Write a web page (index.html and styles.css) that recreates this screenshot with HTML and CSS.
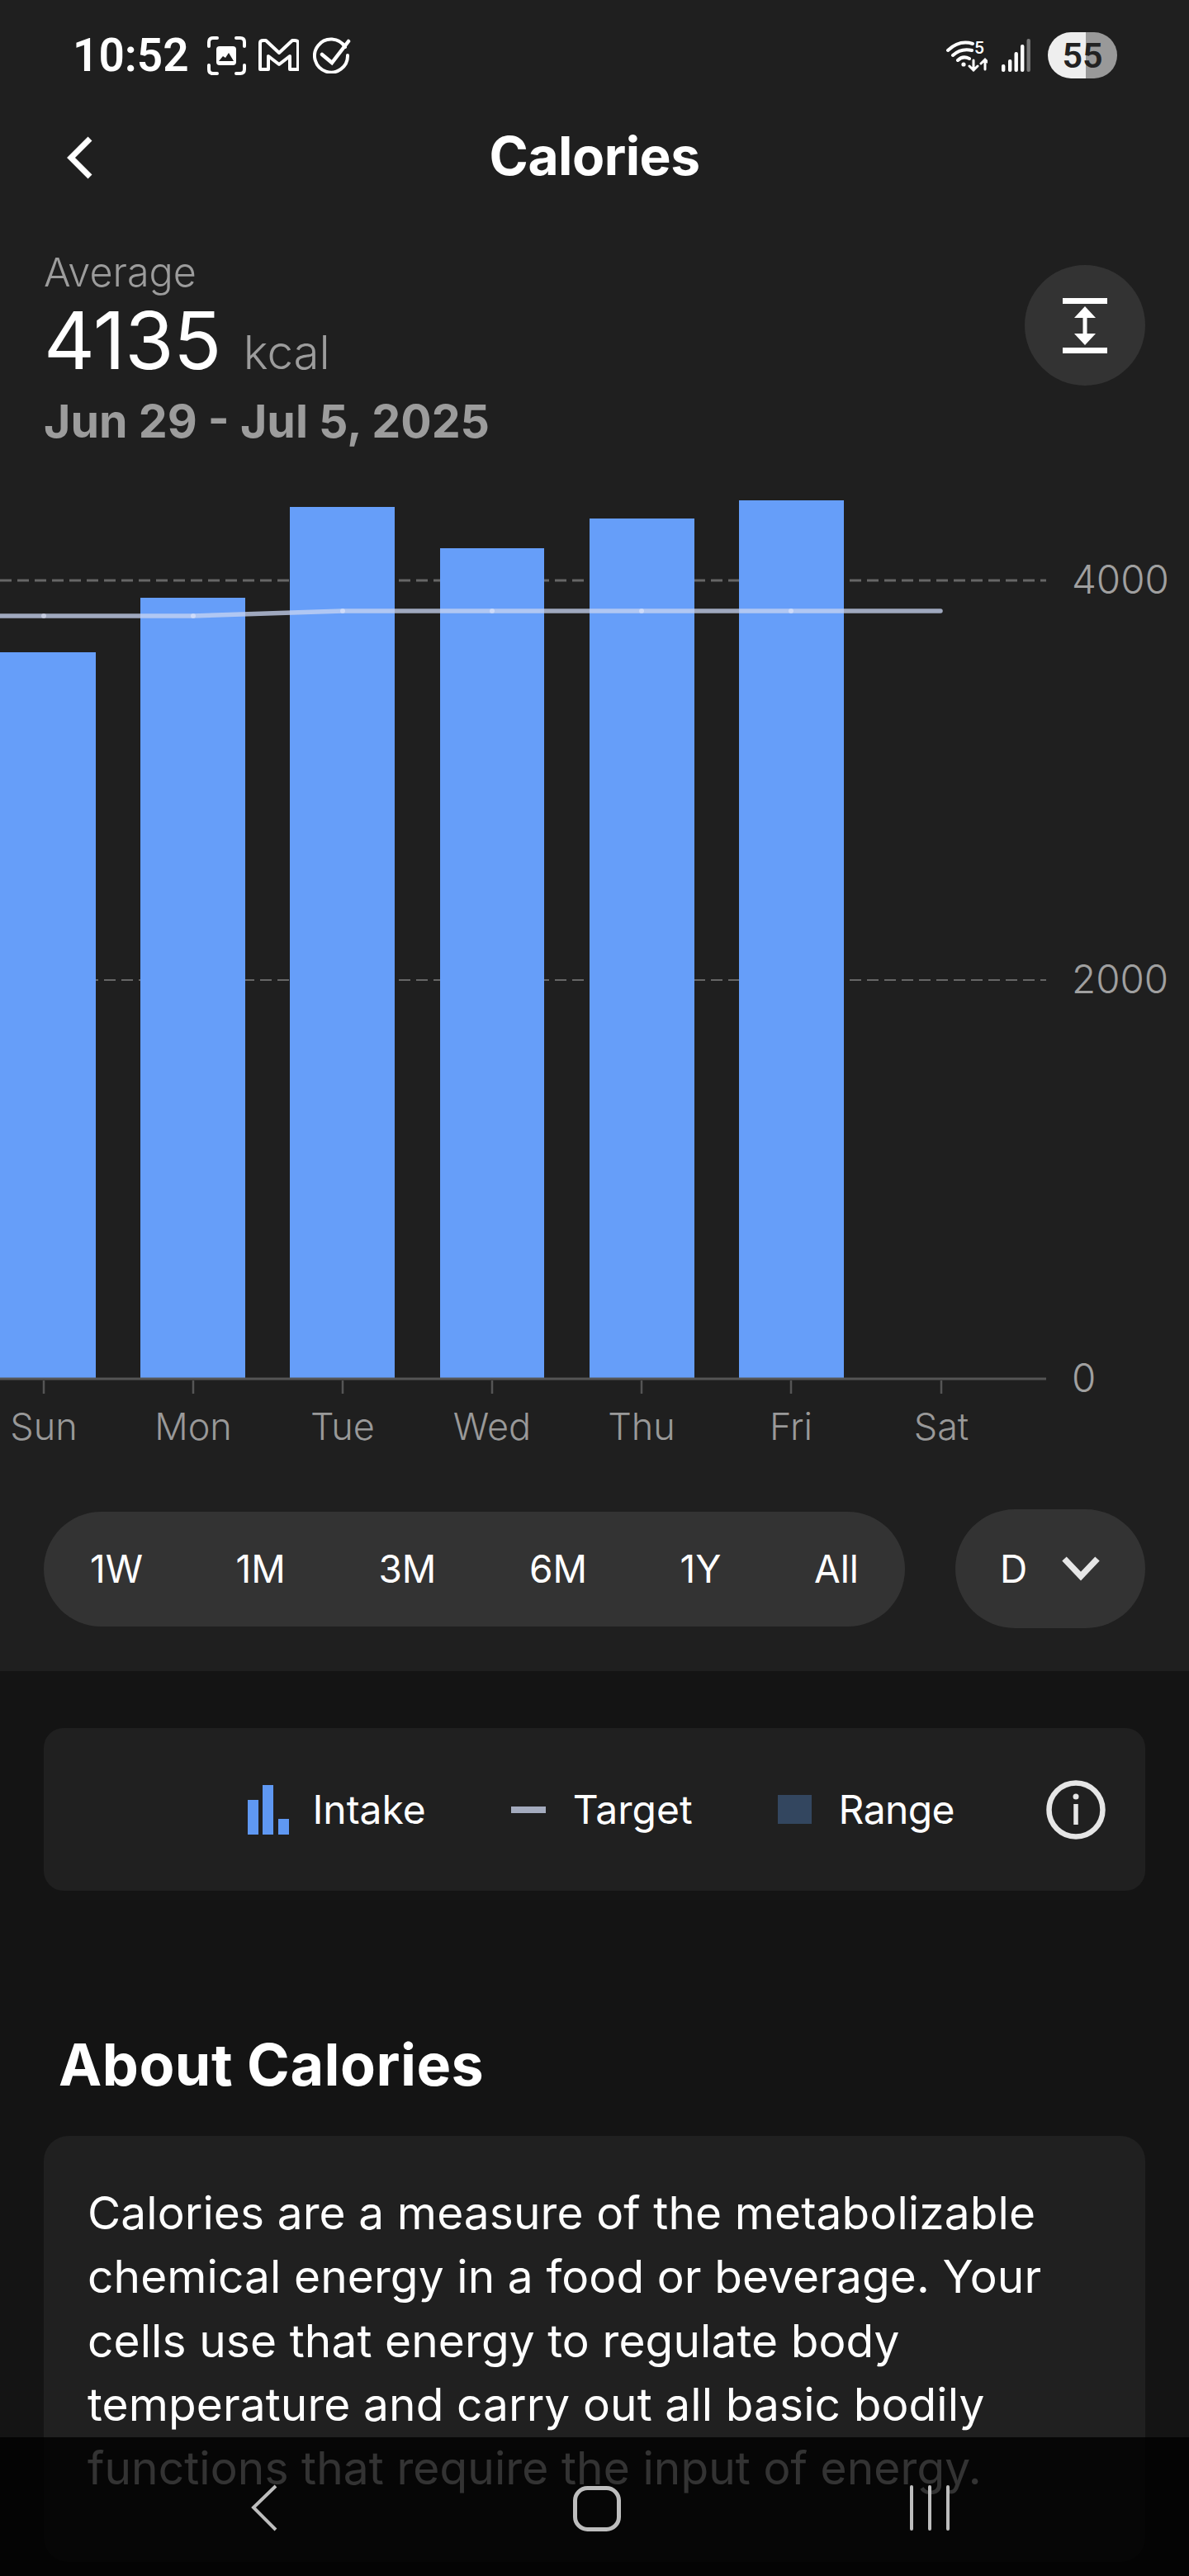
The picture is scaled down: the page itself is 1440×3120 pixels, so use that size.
FILE: index.html
```html
<!DOCTYPE html>
<html lang="en">
<head>
<meta charset="utf-8">
<title>Calories</title>
<link rel="stylesheet" href="styles.css">
</head>
<body>
<div class="screen">
  <section class="top">
    <div class="status">
      <div class="status-left">
        <span class="time">10:52</span>
        <svg class="ic-shot" width="47" height="47" viewBox="249 44 47 47" fill="none" stroke="#fff" stroke-width="4" stroke-linecap="round">
          <path d="M251 56v-5q0-5 5-5h5M284 46h5q5 0 5 5v5M294 79v5q0 5-5 5h-5M261 89h-5q-5 0-5-5v-5"/>
          <rect x="260" y="56" width="24" height="23" rx="4" fill="#fff" stroke="none"/>
          <path d="M263 74l5-6 3 2 4-6 6 10z" fill="#1f1f1f" stroke="none"/>
        </svg>
        <svg class="ic-mail" width="49" height="40" viewBox="311 46 49 40" fill="none" stroke="#fff" stroke-width="4" stroke-linejoin="round">
          <path d="M313 83V51q0-3 4-3h3l16 15 16-15h3q4 0 4 3v32h-10V67l-13 10-13-10v16z"/>
        </svg>
        <svg class="ic-check" width="46" height="44" viewBox="377 46 46 44" fill="none" stroke="#fff" stroke-linecap="round">
          <path d="M416 58a20 20 0 1 0 3 10" stroke-width="4"/>
          <path d="M388 67l12 10 20-26" stroke-width="4.5"/>
        </svg>
      </div>
      <div class="status-right">
        <svg class="ic-wifi" width="50" height="40" viewBox="1146 48 50 40" fill="none" stroke="#fff" stroke-linecap="round">
          <path d="M1148 62q14-13 30-8M1154 68q10-9 23-6M1160 74q6-6 14-2" stroke-width="4"/>
          <circle cx="1167" cy="79" r="2.6" fill="#fff" stroke="none"/>
          <text class="wifi-num" x="1180" y="66">5</text>
          <path d="M1179 74v12M1174 81l5 5 5-5M1193 85V73M1188 78l5-5 5 5" stroke-width="3"/>
        </svg>
        <svg class="ic-signal" width="35" height="40" viewBox="1213 47 35 40">
          <rect class="sig" x="1213" y="78" width="4.4" height="9" rx="2"/>
          <rect class="sig" x="1221" y="72" width="4.4" height="15" rx="2"/>
          <rect class="sig" x="1228.5" y="63" width="4.4" height="24" rx="2"/>
          <rect class="sig" x="1236" y="54" width="4.4" height="33" rx="2"/>
          <rect class="sig-off" x="1243.5" y="47" width="4.4" height="40" rx="2"/>
        </svg>
        <div class="battery">55</div>
      </div>
    </div>

    <header class="appbar">
      <svg class="back" width="40" height="56" viewBox="76 162 40 56" fill="none" stroke="#fff" stroke-width="7">
        <path d="M109 168L86 191l23 23" stroke-linejoin="miter"/>
      </svg>
      <h1 class="title">Calories</h1>
    </header>

    <div class="summary">
      <div class="summary-text">
        <div class="avg-label">Average</div>
        <div class="avg-value"><span class="avg-num">4135</span><span class="avg-unit">kcal</span></div>
        <div class="avg-date">Jun 29 - Jul 5, 2025</div>
      </div>
      <button class="round-btn" aria-label="Fit range">
        <svg width="54" height="67" viewBox="1287 361 54 67" fill="#fff">
          <rect x="1287" y="361" width="54" height="7"/>
          <rect x="1287" y="421" width="54" height="7"/>
          <path d="M1314 371l13 14h-10.500v19H1327l-13 14-13-14h10.500v-19H1301z"/>
        </svg>
      </button>
    </div>

    <svg class="chart" width="1440" height="1240" viewBox="0 560 1440 1240">
      <line class="grid" x1="0" y1="703" x2="1267" y2="703"/>
      <line class="grid grid-thin" x1="0" y1="1187" x2="1267" y2="1187"/>
      <rect class="bar" x="-11" y="790" width="127" height="880"/>
      <rect class="bar" x="170" y="724" width="127" height="946"/>
      <rect class="bar" x="351" y="614" width="127" height="1056"/>
      <rect class="bar" x="533" y="664" width="126" height="1006"/>
      <rect class="bar" x="714" y="628" width="127" height="1042"/>
      <rect class="bar" x="895" y="606" width="127" height="1064"/>
      <line class="axis" x1="0" y1="1670" x2="1267" y2="1670"/>
      <path class="ticks" d="M53 1672v16M234 1672v16M415 1672v16M596 1672v16M777 1672v16M958 1672v16M1140 1672v16"/>
      <path class="target" d="M0 746H234L415 740H1139"/>
      <g class="target-dots">
        <circle cx="53" cy="746" r="3"/><circle cx="234" cy="746" r="3"/><circle cx="415" cy="740" r="3"/>
        <circle cx="596" cy="740" r="3"/><circle cx="777" cy="740" r="3"/><circle cx="958" cy="740" r="3"/>
      </g>
      <text class="y-label" x="1298" y="719">4000</text>
      <text class="y-label" x="1298" y="1203">2000</text>
      <text class="y-label" x="1298" y="1686">0</text>
      <text class="x-label" x="53" y="1744">Sun</text>
      <text class="x-label" x="234" y="1744">Mon</text>
      <text class="x-label" x="415" y="1744">Tue</text>
      <text class="x-label" x="596" y="1744">Wed</text>
      <text class="x-label" x="777" y="1744">Thu</text>
      <text class="x-label" x="958" y="1744">Fri</text>
      <text class="x-label" x="1140" y="1744">Sat</text>
    </svg>

    <div class="controls">
      <div class="ranges">
        <span>1W</span><span>1M</span><span>3M</span><span>6M</span><span>1Y</span><span>All</span>
      </div>
      <div class="period">
        <span>D</span>
        <svg width="46" height="30" viewBox="0 0 46 30" fill="none" stroke="#e6e6e6" stroke-width="7.500"><path d="M3 3l20 21L43 3"/></svg>
      </div>
    </div>
  </section>

  <section class="lower">
    <div class="legend">
      <div class="legend-item gap-intake">
        <svg width="50" height="60" viewBox="301 2165 50 60" fill="#5f98f2">
          <rect x="301" y="2183" width="13" height="42"/>
          <rect x="319" y="2165" width="13" height="60"/>
          <rect x="338" y="2206" width="13" height="19"/>
        </svg>
        <span>Intake</span>
      </div>
      <div class="legend-item">
        <span class="swatch-line"></span>
        <span>Target</span>
      </div>
      <div class="legend-item">
        <span class="swatch-range"></span>
        <span class="tight">Range</span>
      </div>
      <svg class="info" width="72" height="72" viewBox="0 0 72 72" fill="none" stroke="#e6e6e6">
        <circle cx="36" cy="36" r="32.500" stroke-width="6.500"/>
        <path d="M36 29v25" stroke-width="5.500"/>
        <circle cx="36" cy="20" r="3.500" fill="#e6e6e6" stroke="none"/>
      </svg>
    </div>

    <h2 class="about-title">About Calories</h2>
    <div class="about-card">
      <p>Calories are a measure of the metabolizable chemical energy in a food or beverage. Your cells use that energy to regulate body temperature and carry out all basic bodily functions that require the input of energy.</p>
    </div>
  </section>

  <nav class="navbar">
    <svg class="nav-icons" width="1440" height="168" viewBox="0 2952 1440 168" fill="none" stroke="#bdbdbd">
      <path d="M334 3011l-27 26 27 27" stroke-width="4"/>
      <rect x="696.500" y="3013.500" width="53" height="50" rx="15" stroke-width="5"/>
      <path d="M1104 3012v51M1126 3012v51M1148 3012v51" stroke-width="4" stroke-linecap="round"/>
    </svg>
  </nav>
</div>
</body>
</html>
```

FILE: styles.css
```css
* { box-sizing: border-box; }

html, body {
  margin: 0;
  padding: 0;
  background: #141414;
}

body {
  font-family: "Inter", "Liberation Sans", sans-serif;
  color: #fff;
}

.screen {
  position: relative;
  width: 1440px;
  height: 3120px;
  overflow: hidden;
  background: #141414;
}

.top {
  height: 2024px;
  background: #1f1f1f;
}

/* status bar */
.status {
  height: 134px;
  padding: 0 87px 0 88px;
  display: flex;
  align-items: center;
  justify-content: space-between;
}

.status-left,
.status-right {
  display: flex;
  align-items: center;
}

.time {
  font-family: "Roboto", sans-serif;
  font-weight: 600;
  font-size: 55px;
  line-height: 60px;
  margin-right: 22px;
}

.ic-shot { margin-right: 15px; }
.ic-mail { margin-right: 17px; }

.status-right svg { display: block; }
.ic-wifi { margin-right: 17px; }
.ic-signal { margin-right: 21px; }

.wifi-num {
  font-family: "Roboto", sans-serif;
  font-size: 21px;
  font-weight: 500;
  fill: #fff;
  stroke: none;
}

.sig { fill: #fff; }
.sig-off { fill: #777; }

.battery {
  width: 84px;
  height: 56px;
  border-radius: 28px;
  background: linear-gradient(90deg, #eeeeee 0 46px, #999999 46px 100%);
  color: #222;
  font-family: "Roboto", sans-serif;
  font-weight: 600;
  font-size: 43px;
  line-height: 56px;
  text-align: center;
}

/* app bar */
.appbar {
  position: relative;
  height: 110px;
  display: flex;
  align-items: center;
  justify-content: center;
}

.back {
  position: absolute;
  left: 76px;
  top: 28px;
}

.title {
  margin: 0;
  font-size: 64px;
  line-height: 72px;
  font-weight: 700;
  letter-spacing: -0.5px;
}

/* summary */
.summary {
  height: 316px;
  padding: 58px 53px 0 53px;
  display: flex;
  justify-content: space-between;
  align-items: flex-start;
}

.avg-label {
  font-size: 48.500px;
  line-height: 56px;
  font-weight: 350;
  color: #9c9c9c;
}

.avg-value {
  display: flex;
  align-items: baseline;
  height: 96px;
  margin-top: 6px;
}

.avg-num {
  font-size: 96px;
  line-height: 96px;
  font-weight: 400;
  letter-spacing: -0.5px;
}

.avg-unit {
  margin-left: 27px;
  font-size: 56.500px;
  font-weight: 350;
  color: #9c9c9c;
}

.avg-date {
  margin-top: 20px;
  font-size: 55.500px;
  line-height: 60px;
  font-weight: 700;
  color: #9c9c9c;
}

.round-btn {
  width: 146px;
  height: 146px;
  margin-top: 19px;
  border: 0;
  padding: 0;
  border-radius: 50%;
  background: #333333;
  display: flex;
  align-items: center;
  justify-content: center;
}

/* chart */
.chart { display: block; }

.bar { fill: #669ef9; }

.grid {
  stroke: #666666;
  stroke-width: 3;
  stroke-dasharray: 14 7;
}

.grid-thin { stroke-width: 2; }

.axis {
  stroke: #555555;
  stroke-width: 3;
}

.ticks {
  stroke: #555555;
  stroke-width: 2.500;
  fill: none;
}

.target {
  fill: none;
  stroke: rgba(200, 212, 240, 0.76);
  stroke-width: 5.500;
  stroke-linecap: round;
}

.target-dots circle { fill: rgba(235, 240, 255, 0.5); }

.y-label {
  font-size: 47.500px;
  font-weight: 350;
  fill: #a0a0a0;
}

.x-label {
  font-size: 45px;
  font-weight: 350;
  fill: #999999;
  text-anchor: middle;
}

/* controls */
.controls {
  margin-top: 28px;
  padding: 0 53px;
  height: 144px;
  display: flex;
  align-items: center;
  justify-content: space-between;
}

.ranges {
  width: 1043px;
  height: 139px;
  padding: 0 56px;
  border-radius: 70px;
  background: #333333;
  display: flex;
  align-items: center;
  justify-content: space-between;
  font-size: 46px;
  font-weight: 400;
}

.period {
  width: 230px;
  height: 144px;
  padding: 0 55px 0 54px;
  border-radius: 72px;
  background: #333333;
  display: flex;
  align-items: center;
  justify-content: space-between;
  font-size: 46px;
}

/* lower part */
.lower {
  padding: 69px 53px 0;
}

.legend {
  height: 197px;
  padding-right: 48px;
  border-radius: 24px;
  background: #202020;
  display: flex;
  align-items: center;
  justify-content: flex-end;
  gap: 103px;
  font-size: 48px;
}

.legend-item {
  display: flex;
  align-items: center;
  gap: 33px;
}

.gap-intake { gap: 28px; }

.tight { letter-spacing: -0.6px; }

.info { margin-left: 8px; }

.swatch-line {
  width: 42px;
  height: 8px;
  background: #a4abbe;
}

.swatch-range {
  width: 41px;
  height: 35px;
  background: #33465f;
}

.about-title {
  margin: 171px 0 0 18px;
  font-size: 70px;
  line-height: 80px;
  font-weight: 700;
  letter-spacing: 0.5px;
}

.about-card {
  margin-top: 46px;
  height: 516px;
  padding: 55px 53px 0;
  border-radius: 30px;
  background: #202020;
}

.about-card p {
  margin: 0;
  font-size: 55px;
  line-height: 77.250px;
  font-weight: 400;
  letter-spacing: 0.1px;
}

/* navigation overlay */
.navbar {
  position: absolute;
  left: 0;
  right: 0;
  bottom: 0;
  height: 168px;
  background: rgba(0, 0, 0, 0.8);
}

.nav-icons { display: block; }
```
